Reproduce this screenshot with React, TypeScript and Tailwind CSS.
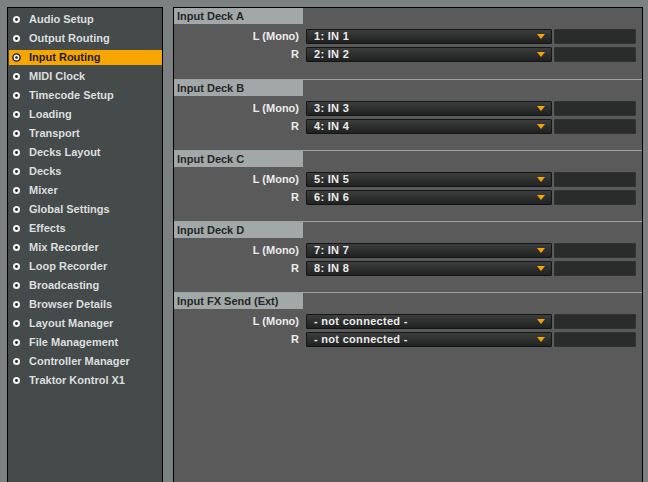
import React from "react";

const menuItems = [
  "Audio Setup",
  "Output Routing",
  "Input Routing",
  "MIDI Clock",
  "Timecode Setup",
  "Loading",
  "Transport",
  "Decks Layout",
  "Decks",
  "Mixer",
  "Global Settings",
  "Effects",
  "Mix Recorder",
  "Loop Recorder",
  "Broadcasting",
  "Browser Details",
  "Layout Manager",
  "File Management",
  "Controller Manager",
  "Traktor Kontrol X1",
];

const sections = [
  { title: "Input Deck A", left: "1: IN 1", right: "2: IN 2" },
  { title: "Input Deck B", left: "3: IN 3", right: "4: IN 4" },
  { title: "Input Deck C", left: "5: IN 5", right: "6: IN 6" },
  { title: "Input Deck D", left: "7: IN 7", right: "8: IN 8" },
  { title: "Input FX Send (Ext)", left: "- not connected -", right: "- not connected -" },
];

const Radio = ({ active }: { active: boolean }) =>
  active ? (
    <svg width="9" height="9" viewBox="0 0 9 9">
      <circle cx="4.5" cy="4.5" r="3.6" fill="#f5f5f5" stroke="#1d1d1d" strokeWidth="1.4" />
      <circle cx="4.5" cy="4.5" r="1.3" fill="#1d1d1d" />
    </svg>
  ) : (
    <svg width="9" height="9" viewBox="0 0 9 9">
      <circle cx="4.5" cy="4.5" r="3.5" fill="#f2f2f2" />
      <circle cx="4.5" cy="4.5" r="1.4" fill="#222" />
    </svg>
  );

const Arrow = () => (
  <svg width="8" height="5" viewBox="0 0 8 5">
    <path d="M0 0H8L4 5Z" fill="#f7a300" />
  </svg>
);

const Row = ({ label, value }: { label: string; value: string }) => (
  <div className="flex items-center h-[15px]">
    <div className="w-[125px] text-right text-[11px] font-bold text-[#ececec] leading-none">{label}</div>
    <div className="ml-[7px] w-[246px] h-[15px] flex items-center justify-between pl-[7px] pr-[6px] border border-[#141515] rounded-[1px] bg-gradient-to-b from-[#3c3e3e] to-[#202121]">
      <span className="text-[11px] font-bold text-[#ececec] tracking-[0.3px] leading-none">{value}</span>
      <Arrow />
    </div>
    <div className="ml-[2px] w-[82px] h-[15px] bg-[#2a2c2b] border border-[#313332] rounded-[1px]" />
  </div>
);

export default function App() {
  return (
    <div
      className="h-[482px] overflow-hidden bg-[#7b8181] pt-[7px] pl-[7px] flex gap-[10px]"
      style={{ fontFamily: '"Liberation Sans", Arial, sans-serif' }}
    >
      {/* sidebar */}
      <div className="w-[156px] h-[500px] shrink-0 bg-[#454a4a] border border-black pt-[4px] flex flex-col gap-[4px]">
        {menuItems.map((item) => {
          const active = item === "Input Routing";
          return (
            <div
              key={item}
              className={
                active
                  ? "ml-[1px] h-[15px] flex items-center bg-[#f7a500] text-[#1c1c1c]"
                  : "ml-[1px] h-[15px] flex items-center text-[#dcdfdf]"
              }
            >
              <div className="ml-[3px] w-[9px] flex">
                <Radio active={active} />
              </div>
              <span className="ml-[8px] text-[11px] font-bold leading-none">{item}</span>
            </div>
          );
        })}
      </div>

      {/* settings panel */}
      <div className="w-[470px] h-[500px] shrink-0 bg-[#595a59] border border-black">
        {sections.map((s) => (
          <div key={s.title} className="h-[71px] border-t border-[#9da2a2] first:border-t-0">
            <div className="w-[129px] h-[16px] bg-[#a2a7a7] pl-[3px] flex items-center text-[11px] font-bold text-[#262727] leading-none">
              {s.title}
            </div>
            <div className="mt-[5px] flex flex-col gap-[3px]">
              <Row label="L (Mono)" value={s.left} />
              <Row label="R" value={s.right} />
            </div>
          </div>
        ))}
      </div>
    </div>
  );
}
